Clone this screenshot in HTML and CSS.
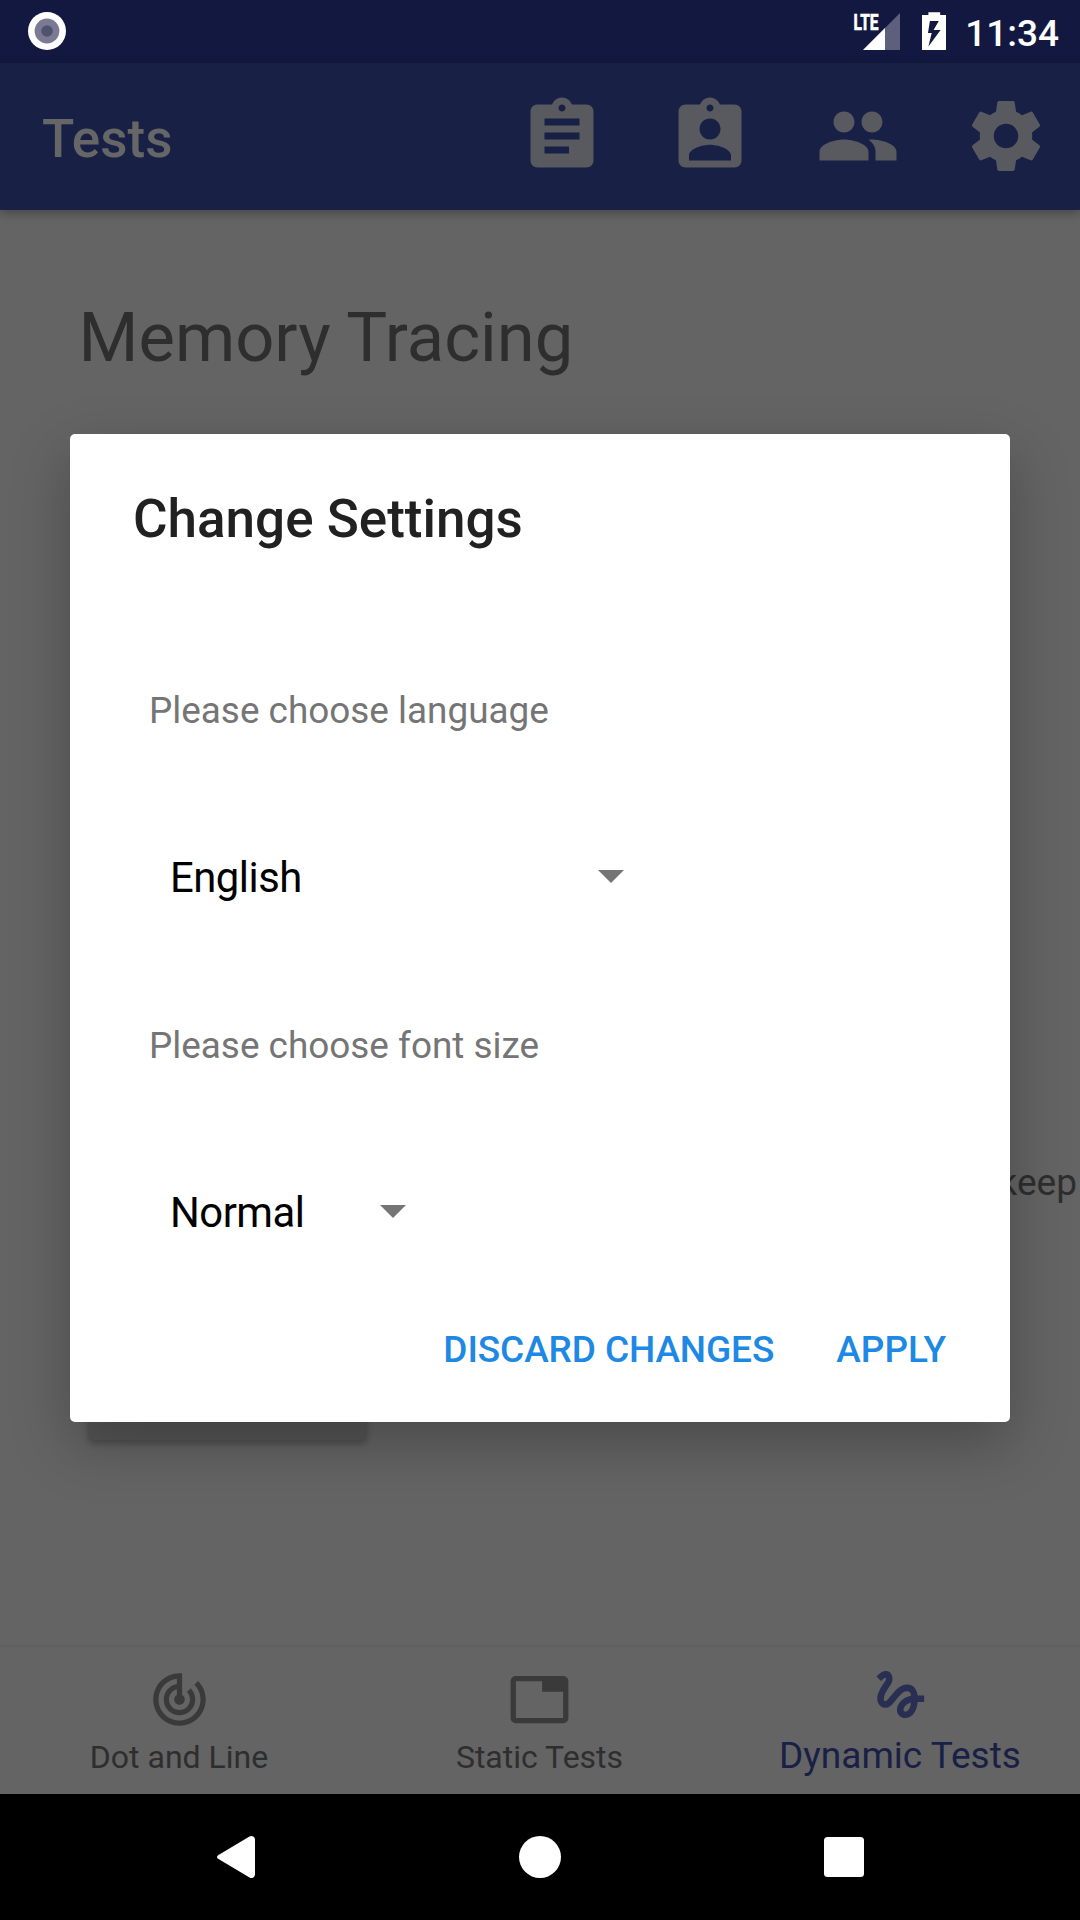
FILE: index.html
```
<!DOCTYPE html>
<html lang="en">
<head>
<meta charset="utf-8">
<title>Tests</title>
<link rel="stylesheet" href="styles.css">
</head>
<body>
<div class="screen">
  <header class="status">
    <svg class="status-dot" width="38" height="38" viewBox="0 0 38 38"><circle cx="19" cy="19" r="19" fill="#fff"/><circle cx="19" cy="19" r="12.4" fill="#7a7b93"/><circle cx="19" cy="19" r="5.8" fill="#50526f"/></svg>
    <svg class="signal" width="48" height="38" viewBox="0 0 48 38">
      <path d="M47 1v37H10z" fill="#5d5f7c"/><path d="M32 16v22H10z" fill="#fff"/>
      <text class="lte" x="0.500" y="18" textLength="25" lengthAdjust="spacingAndGlyphs">LTE</text>
    </svg>
    <svg class="battery" width="24" height="38" viewBox="0 0 24 38"><path fill="#fff" fill-rule="evenodd" d="M6.400.300h11.800v2.700H24v35H0V3h6.400zM7.900 9L6 21h3.700l-3.300 13.500L18.600 18h-7L16.800 9z"/></svg>
    <span class="clock">11:34</span>
  </header>

  <div class="appbar">
    <h1 class="appbar-title">Tests</h1>
    <div class="actions">
      <svg class="action" viewBox="0 0 24 24"><path d="M19 3h-4.180C14.400 1.840 13.300 1 12 1c-1.300 0-2.400.84-2.820 2H5c-1.100 0-2 .9-2 2v14c0 1.100.9 2 2 2h14c1.100 0 2-.9 2-2V5c0-1.100-.9-2-2-2zm-7 0c.55 0 1 .45 1 1s-.45 1-1 1-1-.45-1-1 .45-1 1-1zm2 14H7v-2h7v2zm3-4H7v-2h10v2zm0-4H7V7h10v2z"/></svg>
      <svg class="action" viewBox="0 0 24 24"><path d="M19 3h-4.180C14.400 1.840 13.300 1 12 1c-1.300 0-2.400.84-2.820 2H5c-1.100 0-2 .9-2 2v14c0 1.100.9 2 2 2h14c1.100 0 2-.9 2-2V5c0-1.100-.9-2-2-2zm-7 0c.55 0 1 .45 1 1s-.45 1-1 1-1-.45-1-1 .45-1 1-1zm0 4c1.660 0 3 1.340 3 3s-1.340 3-3 3-3-1.340-3-3 1.340-3 3-3zm6 12H6v-1.400c0-2 4-3.100 6-3.100s6 1.100 6 3.100V19z"/></svg>
      <svg class="action" viewBox="0 0 24 24"><path d="M16 11c1.660 0 2.990-1.340 2.990-3S17.660 5 16 5c-1.660 0-3 1.340-3 3s1.340 3 3 3zm-8 0c1.660 0 2.990-1.340 2.990-3S9.660 5 8 5C6.340 5 5 6.340 5 8s1.340 3 3 3zm0 2c-2.330 0-7 1.170-7 3.500V19h14v-2.500c0-2.330-4.670-3.500-7-3.500zm8 0c-.29 0-.62.020-.97.050 1.160.84 1.970 1.970 1.970 3.450V19h6v-2.500c0-2.330-4.670-3.500-7-3.500z"/></svg>
      <svg class="action" viewBox="0 0 24 24"><path d="M19.430 12.980c.04-.32.07-.64.07-.98s-.03-.66-.07-.98l2.110-1.650c.19-.15.24-.42.12-.64l-2-3.460c-.12-.22-.39-.3-.61-.22l-2.490 1c-.52-.4-1.080-.73-1.690-.98l-.38-2.650C14.460 2.180 14.250 2 14 2h-4c-.25 0-.46.18-.49.420l-.38 2.650c-.61.25-1.170.59-1.690.98l-2.490-1c-.23-.09-.49 0-.61.220l-2 3.460c-.13.220-.07.490.12.640l2.110 1.650c-.04.320-.07.650-.07.980s.03.660.07.980l-2.110 1.650c-.19.150-.24.420-.12.640l2 3.460c.12.220.39.300.61.220l2.490-1c.52.400 1.080.730 1.690.980l.38 2.650c.03.240.24.420.49.420h4c.25 0 .46-.18.49-.42l.38-2.650c.61-.25 1.170-.59 1.690-.98l2.490 1c.23.090.49 0 .61-.22l2-3.460c.12-.22.07-.49-.12-.64l-2.110-1.650zM12 15.500c-1.930 0-3.500-1.570-3.500-3.500s1.570-3.500 3.500-3.500 3.500 1.570 3.500 3.500-1.570 3.500-3.500 3.500z"/></svg>
    </div>
  </div>

  <main class="content">
    <h2 class="heading">Memory Tracing</h2>
    <p class="hint">keep</p>
    <div class="start"></div>
  </main>

  <nav class="tabs">
    <div class="tab">
      <svg class="tab-icon" viewBox="0 0 24 24"><path d="M19.070 4.930l-1.410 1.410C19.100 7.790 20 9.790 20 12c0 4.420-3.580 8-8 8s-8-3.580-8-8c0-4.080 3.050-7.440 7-7.930v2.020C8.160 6.570 6 9.030 6 12c0 3.310 2.690 6 6 6s6-2.690 6-6c0-1.660-.67-3.160-1.760-4.240l-1.410 1.410C15.550 9.900 16 10.900 16 12c0 2.210-1.790 4-4 4s-4-1.790-4-4c0-1.860 1.280-3.410 3-3.860v2.140c-.6.350-1 .98-1 1.720 0 1.100.9 2 2 2s2-.9 2-2c0-.74-.4-1.380-1-1.720V2h-1C6.480 2 2 6.480 2 12s4.480 10 10 10 10-4.480 10-10c0-2.760-1.120-5.260-2.930-7.070z"/></svg>
      <span>Dot and Line</span>
    </div>
    <div class="tab">
      <svg class="tab-icon" viewBox="0 0 24 24"><path d="M21 3H3c-1.100 0-2 .9-2 2v14c0 1.100.9 2 2 2h18c1.100 0 2-.9 2-2V5c0-1.100-.9-2-2-2zm0 16H3V5h10v4h8v10z"/></svg>
      <span>Static Tests</span>
    </div>
    <div class="tab tab-active">
      <svg class="tab-icon" viewBox="0 0 24 24"><path d="M4.590 6.890c.7-.71 1.400-1.350 1.710-1.220.5.200 0 1.030-.3 1.520-.25.420-2.860 3.890-2.860 6.310 0 1.280.48 2.340 1.340 2.980.75.560 1.740.730 2.640.460 1.070-.31 1.950-1.400 3.060-2.770 1.210-1.490 2.830-3.440 4.080-3.440 1.630 0 1.650 1.010 1.760 1.790-3.780.640-5.380 3.670-5.380 5.370 0 1.700 1.440 3.090 3.210 3.090 1.630 0 4.290-1.330 4.690-6.100H21v-2.500h-2.470c-.15-1.650-1.090-4.200-4.030-4.200-2.250 0-4.180 1.910-4.940 2.840-.58.730-2.060 2.480-2.290 2.720-.25.300-.68.840-1.110.840-.45 0-.72-.83-.36-1.920.35-1.090 1.400-2.860 1.850-3.520.78-1.140 1.300-1.920 1.300-3.280C8.950 3.690 7.310 3 6.440 3 5.120 3 3.970 4 3.720 4.250c-.36.360-.66.660-.88.930l1.750 1.710zm9.290 11.660c-.31 0-.74-.26-.74-.72 0-.6.730-2.200 2.870-2.760-.3 2.690-1.430 3.480-2.130 3.480z"/></svg>
      <span>Dynamic Tests</span>
    </div>
  </nav>

  <footer class="system">
    <svg width="38" height="42" viewBox="0 0 38 42"><path fill="#fff" d="M1.500 18.900L32.500.6Q34.500-.4 36.300.6 38 1.500 38 3.500v35q0 2-1.700 2.900-1.800 1-3.800 0L1.500 23.100Q0 22.300 0 21t1.500-2.100z"/></svg>
    <svg width="42" height="42" viewBox="0 0 42 42"><circle cx="21" cy="21" r="21" fill="#fff"/></svg>
    <svg width="40" height="40" viewBox="0 0 40 40"><rect width="40" height="40" rx="3.500" fill="#fff"/></svg>
  </footer>

  <section class="dialog">
    <h2 class="dialog-title">Change Settings</h2>
    <div class="field">
      <p class="label">Please choose language</p>
      <div class="select select-wide"><span>English</span><svg class="arrow" width="26" height="13" viewBox="0 0 26 13"><path d="M0 0h26L13 13z" fill="#757575"/></svg></div>
    </div>
    <div class="field">
      <p class="label">Please choose font size</p>
      <div class="select select-narrow"><span>Normal</span><svg class="arrow" width="26" height="13" viewBox="0 0 26 13"><path d="M0 0h26L13 13z" fill="#757575"/></svg></div>
    </div>
    <div class="buttons"><span>DISCARD CHANGES</span><span>APPLY</span></div>
  </section>
</div>
</body>
</html>
```
FILE: styles.css
```
* { box-sizing: border-box; margin: 0; padding: 0; }
body { font-family: Roboto, "Liberation Sans", sans-serif; background: #000; }
svg { display: block; flex: none; }
.screen {
  position: relative;
  width: 1080px;
  height: 1920px;
  display: grid;
  grid-template-rows: 63px 147px 1437px 147px 126px;
  overflow: hidden;
  background: #646464;
}

.status {
  display: flex;
  align-items: flex-start;
  padding: 12px 21px 0 28px;
  background: #131840;
}
.signal { margin-left: auto; overflow: visible; }
.battery { margin-left: 21px; }
.lte { font-size: 22.5px; font-weight: 700; fill: #fff; stroke: #fff; stroke-width: .7px; }
.clock {
  margin-left: 19px;
  padding-top: 1px;
  font-size: 37px;
  line-height: 42px;
  font-weight: 500;
  color: #fff;
}

.appbar {
  z-index: 1;
  display: flex;
  align-items: center;
  justify-content: space-between;
  padding: 0 32px 0 42px;
  background: #192046;
  box-shadow: 0 3px 10px rgba(0, 0, 0, .3);
}
.appbar-title { padding-top: 4px; font-size: 53px; line-height: 62px; font-weight: 500; color: #666; }
.actions { display: flex; gap: 64px; padding-bottom: 2px; }
.action { width: 84px; height: 84px; fill: #595960; }

.content { padding: 88px 3px 0 78.5px; color: #2e2e2e; }
.heading { font-size: 68.7px; line-height: 80px; font-weight: 400; }
.hint { margin-top: 783px; font-size: 37px; line-height: 44px; text-align: right; }
.start {
  width: 279px;
  height: 105px;
  margin: 130px 0 0 9.5px;
  border-radius: 6px;
  background: #565656;
  box-shadow: 0 4px 6px rgba(0, 0, 0, .22);
}

.tabs {
  display: grid;
  grid-template-columns: 358px 363px 359px;
  background: #646464;
  box-shadow: 0 -1px 3px rgba(0, 0, 0, .07);
}
.tab {
  display: flex;
  flex-direction: column;
  align-items: center;
  padding: 21px 0 0;
  gap: 7px;
  font-size: 32px;
  line-height: 38px;
  color: #2e2e2e;
}
.tab-icon { width: 63px; height: 63px; fill: #3a3a3a; }
.tab-active { padding: 16px 1px 0 0; gap: 8px; font-size: 37px; line-height: 44px; color: #192046; }
.tab-active .tab-icon { fill: #282f52; }

.system {
  display: flex;
  align-items: center;
  padding-left: 217px;
  background: #000;
}
.system svg + svg { margin-left: 264px; }
.system svg:last-child { margin-left: 263px; }

.dialog {
  z-index: 2;
  position: absolute;
  left: 70px;
  top: 434px;
  width: 940px;
  height: 988px;
  padding: 55px 61px 0;
  border-radius: 5px;
  background: #fff;
  box-shadow: 0 22px 58px rgba(0, 0, 0, .26);
}
.dialog-title { padding-left: 2px; margin-bottom: 140px; font-size: 53px; line-height: 60px; font-weight: 500; color: #212121; }
.field { height: 335px; padding-left: 18px; }
.label { font-size: 36.9px; line-height: 44px; color: #757575; }
.select {
  display: flex;
  align-items: center;
  justify-content: space-between;
  margin: 120px 0 0 20px;
  font-size: 41.8px;
  line-height: 50px;
  letter-spacing: -.5px;
  color: #000;
}
.select span { padding-left: 1px; }
.arrow { margin-bottom: 3px; }
.select-wide { width: 454.5px; }
.select-narrow { width: 236.5px; }
.buttons {
  display: flex;
  justify-content: flex-end;
  gap: 62px;
  margin-top: -31px;
  padding-right: 3px;
  font-size: 37px;
  line-height: 44px;
  font-weight: 500;
  color: #1e88e5;
}
.buttons span:first-child { letter-spacing: -.1px; }
```
